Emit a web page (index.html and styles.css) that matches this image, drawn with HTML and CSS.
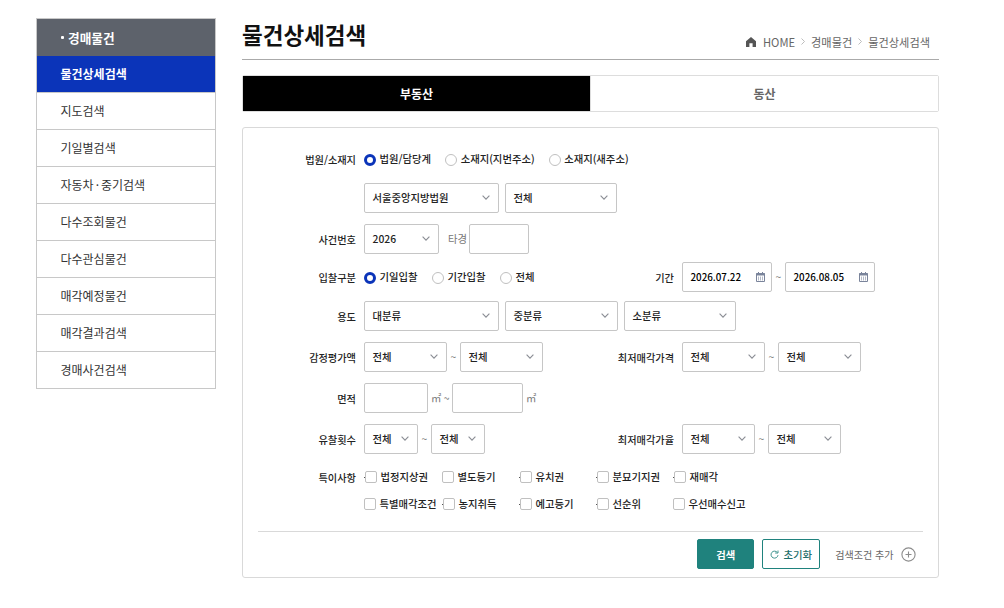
FILE: index.html
```html
<!DOCTYPE html>
<html lang="ko">
<head>
    <meta charset="UTF-8">
    <meta name="viewport" content="width=device-width, initial-scale=1.0">
    <title>물건상세검색</title>
    <link rel="stylesheet" href="styles.css">
</head>
<body>
    <!-- shared icons -->
    <svg class="icon-defs" width="0" height="0" aria-hidden="true">
        <symbol id="icon-arrow" viewBox="0 0 8 5">
            <path d="M0.6 0.6 L4 4.2 L7.4 0.6" fill="none" stroke="#8a8d94" stroke-width="1.1"/>
        </symbol>
        <symbol id="icon-sep" viewBox="0 0 4 7">
            <path d="M0.5 0.5 L3.5 3.5 L0.5 6.5" fill="none" stroke="#b5b5b5" stroke-width="0.9"/>
        </symbol>
        <symbol id="icon-calendar" viewBox="0 0 9 10">
            <path d="M2.5 0V2M6.5 0V2" stroke="#7a849b" stroke-width="1"/>
            <path d="M0.5 1.5H8.5V9.5H0.5Z" fill="#fff" stroke="#7a849b" stroke-width="1"/>
            <path d="M0 2.5H9" stroke="#7a849b" stroke-width="2"/>
            <path d="M2.5 4.5V8.5M4.5 4.5V8.5M6.5 4.5V8.5" stroke="#b4bac8" stroke-width="1"/>
        </symbol>
    </svg>

    <div class="container">
        <aside class="sidebar">
            <h2 class="sidebar-title">경매물건</h2>
            <ul class="menu">
                <li class="active"><a href="#">물건상세검색</a></li>
                <li><a href="#">지도검색</a></li>
                <li><a href="#">기일별검색</a></li>
                <li><a href="#">자동차<span class="mid">·</span>중기검색</a></li>
                <li><a href="#">다수조회물건</a></li>
                <li><a href="#">다수관심물건</a></li>
                <li><a href="#">매각예정물건</a></li>
                <li><a href="#">매각결과검색</a></li>
                <li><a href="#">경매사건검색</a></li>
            </ul>
        </aside>

        <main class="content">
            <header class="page-header">
                <h1>물건상세검색</h1>
                <nav class="breadcrumb">
                    <svg class="home" width="10" height="10" viewBox="0 0 10 10"><path d="M5 0 L10 4.2 V10 H6.6 V6.2 H3.4 V10 H0 V4.2 Z" fill="#555"/></svg>
                    <span>HOME</span>
                    <svg class="sep" width="4" height="7"><use href="#icon-sep"/></svg>
                    <span>경매물건</span>
                    <svg class="sep" width="4" height="7"><use href="#icon-sep"/></svg>
                    <span>물건상세검색</span>
                </nav>
            </header>

            <div class="tabs">
                <button type="button" class="tab active">부동산</button>
                <button type="button" class="tab">동산</button>
            </div>

            <form class="search-form">
                <div class="row row-court">
                    <span class="label">법원/소재지</span>
                    <div class="fields wide">
                        <label class="radio"><input type="radio" name="place" checked>법원/담당계</label>
                        <label class="radio"><input type="radio" name="place">소재지(지번주소)</label>
                        <label class="radio"><input type="radio" name="place">소재지(새주소)</label>
                    </div>
                </div>
                <div class="row">
                    <div class="fields wide">
                        <span class="select w135"><span>서울중앙지방법원</span><svg width="8" height="5"><use href="#icon-arrow"/></svg></span>
                        <span class="select w112"><span>전체</span><svg width="8" height="5"><use href="#icon-arrow"/></svg></span>
                    </div>
                </div>
                <div class="row row-case">
                    <span class="label">사건번호</span>
                    <div class="fields">
                        <span class="select w75"><span>2026</span><svg width="8" height="5"><use href="#icon-arrow"/></svg></span>
                        <span class="unit case-unit">타경</span>
                        <input type="text" class="w60">
                    </div>
                </div>
                <div class="row row-bid">
                    <span class="label">입찰구분</span>
                    <div class="fields">
                        <label class="radio"><input type="radio" name="bid" checked>기일입찰</label>
                        <label class="radio"><input type="radio" name="bid">기간입찰</label>
                        <label class="radio"><input type="radio" name="bid">전체</label>
                    </div>
                    <span class="label">기간</span>
                    <div class="fields range">
                        <span class="date"><span>2026.07.22</span><svg width="9" height="10"><use href="#icon-calendar"/></svg></span>
                        <span class="tilde">~</span>
                        <span class="date"><span>2026.08.05</span><svg width="9" height="10"><use href="#icon-calendar"/></svg></span>
                    </div>
                </div>
                <div class="row">
                    <span class="label">용도</span>
                    <div class="fields wide">
                        <span class="select w135"><span>대분류</span><svg width="8" height="5"><use href="#icon-arrow"/></svg></span>
                        <span class="select w113"><span>중분류</span><svg width="8" height="5"><use href="#icon-arrow"/></svg></span>
                        <span class="select w112"><span>소분류</span><svg width="8" height="5"><use href="#icon-arrow"/></svg></span>
                    </div>
                </div>
                <div class="row">
                    <span class="label">감정평가액</span>
                    <div class="fields range">
                        <span class="select w83"><span>전체</span><svg width="8" height="5"><use href="#icon-arrow"/></svg></span>
                        <span class="tilde">~</span>
                        <span class="select w83"><span>전체</span><svg width="8" height="5"><use href="#icon-arrow"/></svg></span>
                    </div>
                    <span class="label">최저매각가격</span>
                    <div class="fields range">
                        <span class="select w83"><span>전체</span><svg width="8" height="5"><use href="#icon-arrow"/></svg></span>
                        <span class="tilde">~</span>
                        <span class="select w83"><span>전체</span><svg width="8" height="5"><use href="#icon-arrow"/></svg></span>
                    </div>
                </div>
                <div class="row">
                    <span class="label">면적</span>
                    <div class="fields area">
                        <input type="text" class="w64">
                        <span class="unit">㎡ ~</span>
                        <input type="text" class="w71">
                        <span class="unit">㎡</span>
                    </div>
                </div>
                <div class="row">
                    <span class="label">유찰횟수</span>
                    <div class="fields range">
                        <span class="select w54"><span>전체</span><svg width="8" height="5"><use href="#icon-arrow"/></svg></span>
                        <span class="tilde">~</span>
                        <span class="select w54"><span>전체</span><svg width="8" height="5"><use href="#icon-arrow"/></svg></span>
                    </div>
                    <span class="label">최저매각가율</span>
                    <div class="fields range">
                        <span class="select w73"><span>전체</span><svg width="8" height="5"><use href="#icon-arrow"/></svg></span>
                        <span class="tilde">~</span>
                        <span class="select w73"><span>전체</span><svg width="8" height="5"><use href="#icon-arrow"/></svg></span>
                    </div>
                </div>
                <div class="row row-special">
                    <span class="label">특이사항</span>
                    <div class="checks wide">
                        <label class="check dot"><input type="checkbox">법정지상권</label>
                        <label class="check"><input type="checkbox">별도등기</label>
                        <label class="check dot"><input type="checkbox">유치권</label>
                        <label class="check dot"><input type="checkbox">분묘기지권</label>
                        <label class="check dot"><input type="checkbox">재매각</label>
                        <label class="check"><input type="checkbox">특별매각조건</label>
                        <label class="check dot"><input type="checkbox">농지취득</label>
                        <label class="check dot"><input type="checkbox">예고등기</label>
                        <label class="check dot"><input type="checkbox">선순위</label>
                        <label class="check"><input type="checkbox">우선매수신고</label>
                    </div>
                </div>

                <div class="actions">
                    <button type="button" class="btn btn-search">검색</button>
                    <button type="button" class="btn btn-reset">
                        <svg width="9" height="9" viewBox="0 0 9 9"><path d="M7.4 2.6 A3.5 3.5 0 1 0 8 5.2" fill="none" stroke="#3f948f" stroke-width="1"/><path d="M8 0.5 V3 H5.2" fill="none" stroke="#3f948f" stroke-width="1"/></svg>초기화
                    </button>
                    <button type="button" class="btn-more">검색조건 추가
                        <svg width="15" height="15" viewBox="0 0 15 15" fill="none" stroke="#8c8c8c"><circle cx="7.5" cy="7.5" r="6.6" stroke-width="1.1"/><path d="M7.5 4.5V10.5M4.5 7.5H10.5" stroke-width="1.1"/></svg>
                    </button>
                </div>
            </form>
        </main>
    </div>
</body>
</html>
```
FILE: styles.css
```css
* {
    box-sizing: border-box;
}

body {
    margin: 0;
    background: #fff;
    color: #333;
    font-family: "Noto Sans CJK KR", sans-serif;
    font-size: 10.35px;
}

button,
input {
    font-family: inherit;
    font-size: inherit;
}

.icon-defs {
    display: none;
}

.container {
    display: flex;
    align-items: flex-start;
    gap: 26px;
    width: 939px;
    padding: 18px 0 0 36px;
}

/* left menu */
.sidebar {
    width: 180px;
    flex-shrink: 0;
    border: 1px solid #c8c8c8;
}

.sidebar-title {
    display: flex;
    align-items: center;
    gap: 4px;
    height: 37px;
    margin: 0;
    padding-left: 24px;
    background: #5d626b;
    color: #fff;
    font-size: 12.7px;
    font-weight: 700;
}

.sidebar-title::before {
    content: "";
    width: 3px;
    height: 3px;
    border-radius: 1px;
    background: #fff;
}

.menu {
    margin: 0;
    padding: 0;
    list-style: none;
}

.menu li {
    height: 37px;
    border-bottom: 1px solid #c8c8c8;
}

.menu li:last-child {
    height: 36px;
    border-bottom: 0;
}

.menu a {
    display: block;
    height: 36px;
    padding-left: 23.5px;
    color: #333;
    font-size: 12px;
    line-height: 36px;
    text-decoration: none;
}

.menu .mid {
    margin: 0 2px;
}

.menu .active a {
    background: #0b34b9;
    color: #fff;
    font-weight: 700;
}

/* page title */
.content {
    flex: 1;
}

.page-header {
    display: flex;
    justify-content: space-between;
    height: 42px;
    padding-right: 9px;
    border-bottom: 1px solid #aaa;
}

.page-header h1 {
    margin: 0;
    color: #111;
    font-size: 22.5px;
    font-weight: 700;
    line-height: 33px;
}

.breadcrumb {
    display: flex;
    align-items: center;
    height: 47px;
    color: #666;
    font-size: 11.2px;
}

.breadcrumb .home {
    margin-right: 7px;
}

.breadcrumb .sep {
    margin: 0 6px;
}

/* tabs */
.tabs {
    display: flex;
    height: 37px;
    margin-top: 15px;
    border: 1px solid #ddd;
    border-radius: 2px;
}

.tab {
    flex: 1;
    padding: 0;
    border: 0;
    background: #fff;
    color: #666;
    font-size: 12px;
    font-weight: 700;
}

.tab.active {
    background: #000;
    color: #fff;
}

.tab + .tab {
    border-left: 1px solid #ddd;
}

/* search form */
.search-form {
    height: 451px;
    margin-top: 15px;
    padding-top: 17px;
    border: 1px solid #d9d9d9;
    border-radius: 3px;
}

.row {
    display: grid;
    grid-template-columns: 113px 210px 92px 1fr;
    column-gap: 8px;
    align-items: center;
    height: 30px;
    margin-bottom: 11px;
}

.row-court,
.row-case {
    margin-bottom: 8px;
}

.row-bid {
    margin-bottom: 9px;
}

.row-special {
    align-items: start;
    height: auto;
    margin-bottom: 0;
    padding-top: 5px;
}

.label {
    padding-top: 1px;
    color: #222;
    font-size: 10.2px;
    font-weight: 500;
    line-height: 14px;
    text-align: right;
    white-space: nowrap;
}

.row-court .label {
    padding: 0 0 1px;
}

.fields {
    display: flex;
    align-items: center;
    gap: 6px;
    white-space: nowrap;
}

.wide {
    grid-column: 2 / 5;
}

.fields.range {
    gap: 0;
}

.tilde {
    width: 13px;
    padding-bottom: 1px;
    color: #777;
    text-align: center;
}

.unit {
    padding-bottom: 1px;
    color: #777;
}

.case-unit {
    width: 19px;
    margin: 0 -4px 0 3px;
}

.fields.area {
    gap: 3px;
}

.area .unit:not(:last-child) {
    width: 18px;
}

.select,
.date {
    display: flex;
    align-items: center;
    justify-content: space-between;
    height: 30px;
    padding: 0 8px 1px 7.5px;
    border: 1px solid #c6c6c6;
    border-radius: 2px;
    background: #fff;
    color: #222;
    font-weight: 500;
}

.date {
    width: 90px;
    padding: 0 6px 0 7.5px;
    color: #000;
    font-size: 9.8px;
}

input[type="text"] {
    height: 30px;
    padding: 0 8px;
    border: 1px solid #c6c6c6;
    border-radius: 2px;
}

.w54 { width: 54px; }
.w60 { width: 60px; }
.w64 { width: 64px; }
.w71 { width: 71px; }
.w73 { width: 73px; }
.w75 { width: 75px; }
.w83 { width: 83px; }
.w112 { width: 112px; }
.w113 { width: 113px; }
.w135 { width: 135px; }

.radio,
.check {
    display: flex;
    align-items: center;
    color: #222;
    font-weight: 500;
    line-height: 14px;
}

.radio {
    margin-right: 8px;
    padding-bottom: 2px;
}

.radio input {
    width: 12px;
    height: 12px;
    margin: 2px 3.5px 0 0;
    border: 1px solid #c0c0c0;
    border-radius: 50%;
    background: #fff;
    appearance: none;
}

.radio input:checked {
    border: 3px solid #0b34b9;
}

.row-bid .radio {
    margin-right: 8.4px;
    padding-bottom: 0;
}

.row-bid .radio input {
    margin-top: 1px;
}

.checks {
    display: grid;
    grid-template-columns: 78px 77px 77px 77px 1fr;
    row-gap: 13px;
    white-space: nowrap;
}

.check input {
    width: 12px;
    height: 12px;
    margin: 0 3.5px 0 0;
    border: 1px solid #c0c0c0;
    border-radius: 2px;
    background: #fff;
    appearance: none;
}

.check.dot::before {
    content: "";
    width: 1px;
    height: 1px;
    background: #555;
}

/* bottom buttons */
.actions {
    display: flex;
    align-items: center;
    justify-content: flex-end;
    margin: 20px 15px 0;
    padding: 7px 7px 0 0;
    border-top: 1px solid #d9d9d9;
}

.btn {
    display: flex;
    align-items: center;
    justify-content: center;
    height: 30px;
    padding: 0;
    border: 1px solid #1f827d;
    border-radius: 2px;
    font-weight: 500;
}

.btn-search {
    width: 57px;
    background: #1f827d;
    color: #fff;
    font-weight: 700;
}

.btn-reset {
    gap: 4px;
    width: 58px;
    margin-left: 8px;
    background: #fff;
    color: #1f6f6b;
}

.btn-more {
    display: flex;
    align-items: center;
    gap: 7.5px;
    margin-left: 15px;
    padding: 0;
    border: 0;
    background: none;
    color: #666;
    font-size: 10.05px;
}
```
